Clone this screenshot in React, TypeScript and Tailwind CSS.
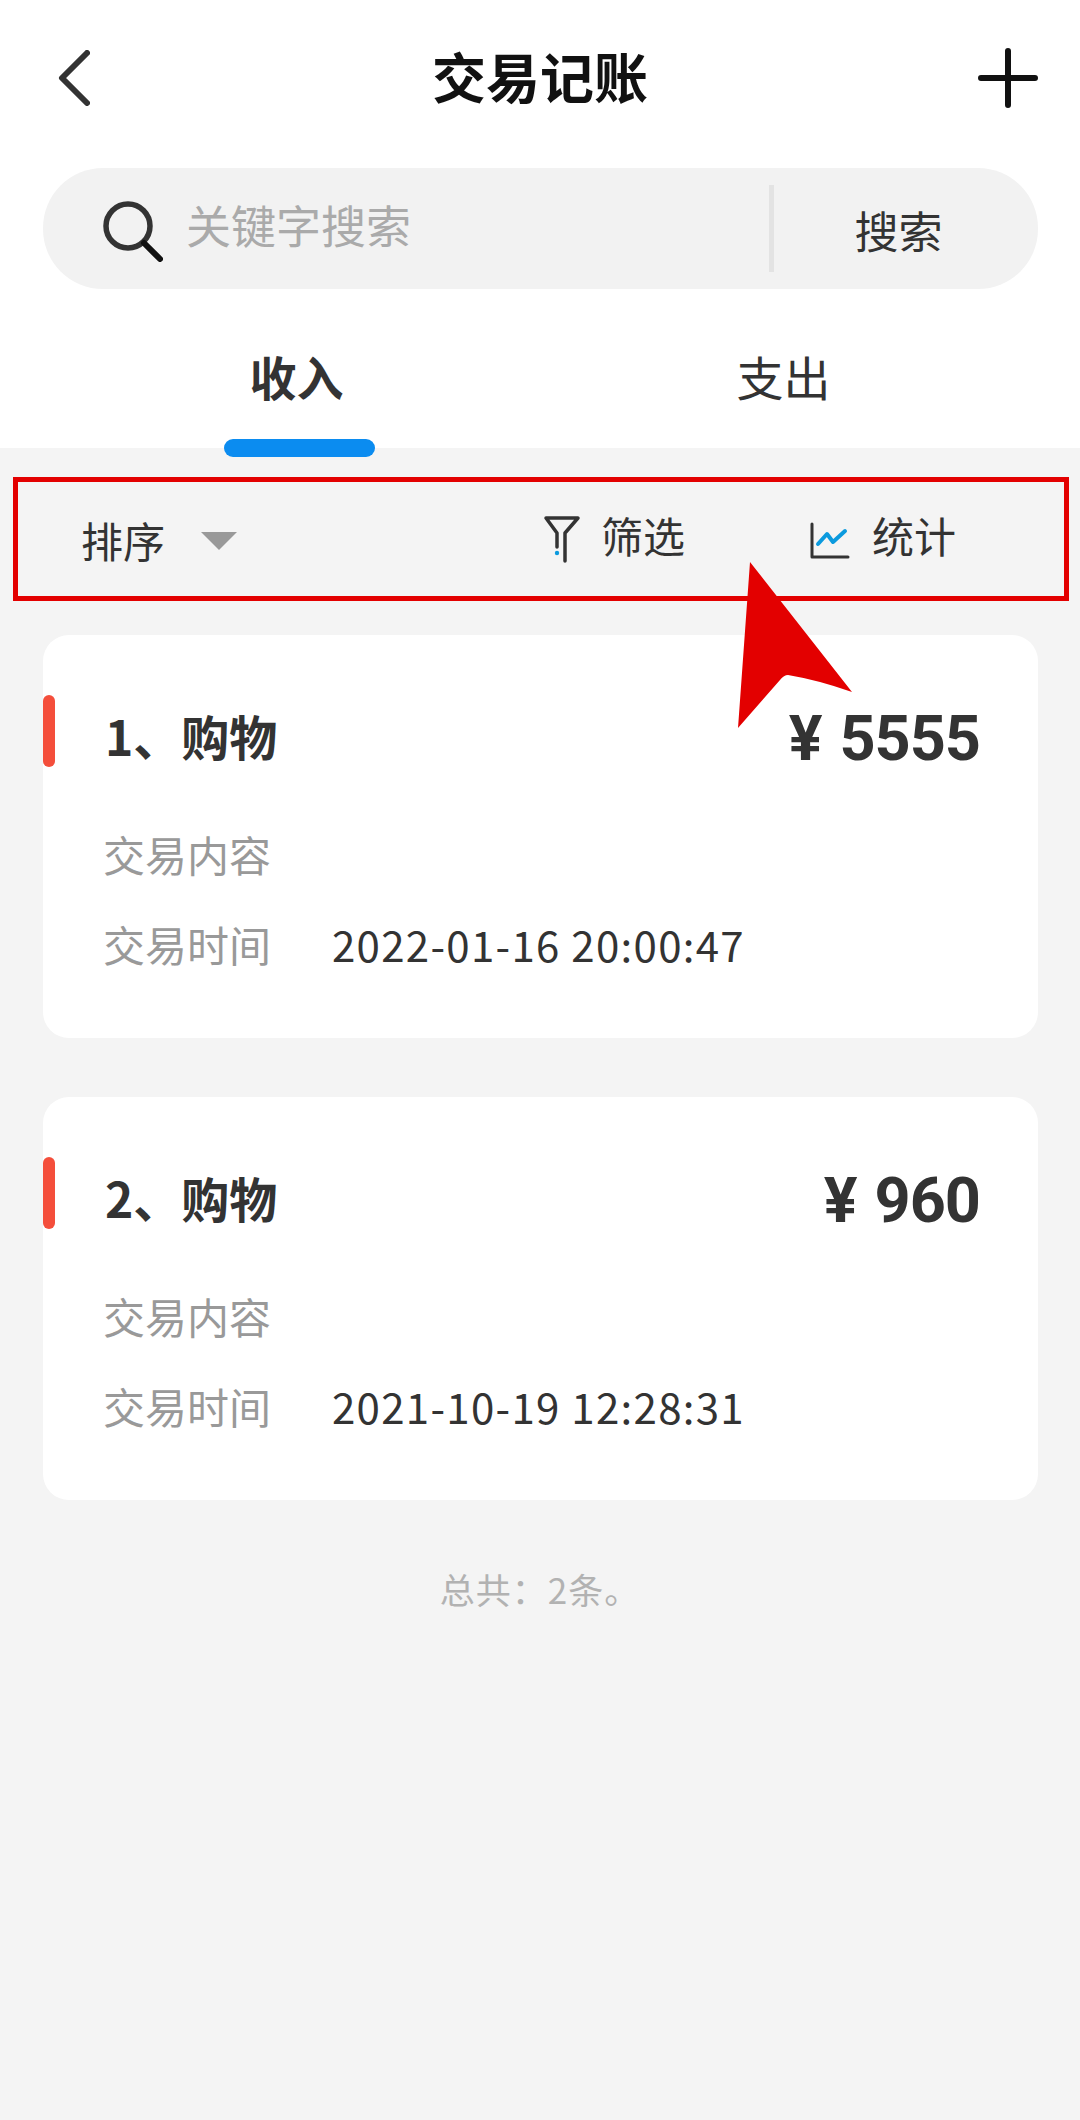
const records = [
  { title: "1、购物", amount: "5555", time: "2022-01-16 20:00:47" },
  { title: "2、购物", amount: "960", time: "2021-10-19 12:28:31" },
];

function RecordCard({ title, amount, time }: { title: string; amount: string; time: string }) {
  return (
    <div className="relative h-[403px] rounded-[26px] bg-white pl-[60px] pr-[58px]">
      <div className="absolute left-0 top-[60px] h-[72px] w-[12px] rounded-full bg-[#f44e3b]" />
      <div className="flex h-[189px] items-center justify-between pt-[11px] text-[#333333]">
        <div className="pl-[2px] text-[48px] font-bold leading-none">{title}</div>
        <div className="mt-[6px] flex items-center text-[63px] font-bold leading-none tracking-[-1px] [font-family:'Roboto',sans-serif]">
          <span className="mr-[18px]">¥</span>
          {amount}
        </div>
      </div>
      <div className="text-[42px] leading-[60px] text-[#999999]">交易内容</div>
      <div className="mt-[30px] flex items-center text-[42px] leading-[60px]">
        <span className="w-[229px] text-[#999999]">交易时间</span>
        <span className="tracking-[1.3px] text-[#333333]">{time}</span>
      </div>
    </div>
  );
}

export default function App() {
  return (
    <div className="relative flex min-h-[2120px] w-[1080px] flex-col bg-[#f4f4f4] [font-family:'Noto_Sans_CJK_SC','Noto_Sans',sans-serif]">
      <div className="bg-white">
        <div className="grid h-[168px] grid-cols-[1fr_auto_1fr] items-center pb-[12px] px-[42px]">
          <svg className="ml-[16px]" width="32" height="56" viewBox="0 0 32 56" fill="none" stroke="#333333" strokeWidth="6" strokeLinecap="round" strokeLinejoin="round">
            <path d="M29 3 L4 28 L29 53" />
          </svg>
          <div className="pb-[4px] text-[54px] font-bold leading-none text-[#111111]">交易记账</div>
          <svg className="justify-self-end" width="60" height="60" viewBox="0 0 60 60" fill="none" stroke="#111111" strokeWidth="6" strokeLinecap="round">
            <path d="M30 3 V57 M3 30 H57" />
          </svg>
        </div>
        <div className="ml-[43px] mr-[42px] flex h-[121px] items-center rounded-[60px] bg-[#f2f2f2]">
          <svg className="ml-[58px] mt-[4px] shrink-0" width="62" height="62" viewBox="0 0 62 62" fill="none">
            <circle cx="27" cy="26" r="22" stroke="#333333" strokeWidth="5.5" />
            <path d="M43 43 L59 59" stroke="#111111" strokeWidth="6" strokeLinecap="round" />
          </svg>
          <div className="ml-[23px] w-[583px] pb-[8px] text-[45px] leading-none text-[#aaaaaa]">关键字搜索</div>
          <div className="h-[87px] w-[5px] bg-[#e3e3e3]" />
          <div className="flex-1 pr-[15px] pt-[2px] text-center text-[44px] leading-none text-[#333333]">搜索</div>
        </div>
        <div className="grid h-[159px] grid-cols-2 px-[53px] text-[47px] leading-none text-[#333333]">
          <div className="relative flex items-center justify-center pt-[14px] font-bold">
            收入
            <div className="absolute bottom-[-9px] left-[171px] h-[18px] w-[151px] rounded-full bg-[#0b8cf0]" />
          </div>
          <div className="flex items-center justify-center pt-[14px]">支出</div>
        </div>
      </div>

      <div className="ml-[13px] mr-[11px] mt-[29px] flex h-[124px] items-center border-[5px] border-[#e30000] text-[42px] leading-none text-[#333333]">
        <div className="flex items-center pl-[63px] pt-[2px]">
          排序
          <div className="ml-[36px] mt-[2px] h-0 w-0 border-x-[18px] border-t-[18px] border-x-transparent border-t-[#999999]" />
        </div>
        <div className="ml-auto flex items-center pb-[8px]">
          <svg className="mt-[10px]" width="38" height="50" viewBox="0 0 38 50" fill="none" stroke="#333333" strokeWidth="3.5" strokeLinecap="round" strokeLinejoin="round">
            <path d="M22 46 V18 L35 3 H3 L14 18 V32" />
            <circle cx="14" cy="38" r="2.2" fill="#0b9ade" stroke="none" />
          </svg>
          <span className="ml-[20px]">筛选</span>
        </div>
        <div className="ml-[125px] mr-[108px] flex items-center pb-[8px]">
          <svg className="mt-[12px]" width="40" height="38" viewBox="0 0 40 38" fill="none" strokeLinecap="round" strokeLinejoin="round">
            <path d="M2 2 V35 H38" stroke="#333333" strokeWidth="3" />
            <path d="M8 22 L17 12 L23 20 L35 9" stroke="#0b9ade" strokeWidth="4" />
          </svg>
          <span className="ml-[22px]">统计</span>
        </div>
      </div>

      <div className="ml-[43px] mr-[42px] mt-[34px] flex flex-col gap-[59px]">
        {records.map((r) => (
          <RecordCard key={r.title} {...r} />
        ))}
      </div>

      <div className="mt-[71px] text-center text-[35px] leading-none tracking-[1px] text-[#b2b2b2]">总共：2条。</div>

      <svg className="absolute left-[738px] top-[562px]" width="114" height="166" viewBox="0 0 114 166" fill="#e30000">
        <path d="M12 0 L114 130 Q80 118 50 113 Q46 113 42 118 L0 166 Z" />
      </svg>
    </div>
  );
}
